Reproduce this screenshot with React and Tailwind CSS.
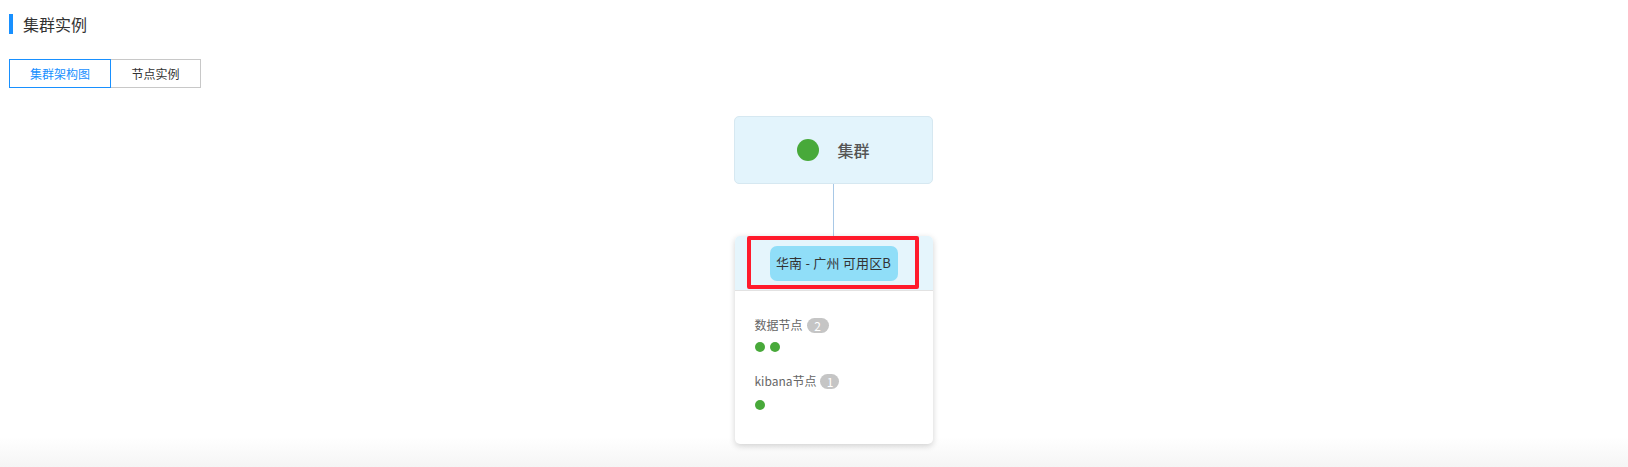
export default function App() {
  return (
    <div
      className="relative w-[1628px] h-[467px] bg-white overflow-hidden"
      style={{ fontFamily: '"Noto Sans CJK SC", "Noto Sans", sans-serif' }}
    >
      <div className="absolute left-0 right-0 bottom-0 h-[30px] bg-gradient-to-b from-white to-[#f5f5f5]" />

      <div className="relative z-10">
        <div className="flex items-center h-[20px] pt-[14px] box-content ml-[9px]">
          <div className="w-[4px] h-[20px] bg-[#1890ff]" />
          <div className="ml-[10px] text-[16px] leading-[20px] text-[#333]">集群实例</div>
        </div>

        <div className="flex mt-[25px] ml-[9px] h-[29px]">
          <div className="w-[102px] h-[29px] border border-[#1890ff] flex items-center justify-center text-[12px] text-[#1890ff]">
            集群架构图
          </div>
          <div className="w-[90px] h-[29px] border border-l-0 border-[#c8c8c8] flex items-center justify-center text-[12px] text-[#333]">
            节点实例
          </div>
        </div>

        <div className="ml-[734px] mt-[28px] w-[199px] flex flex-col items-center">
          <div className="w-[199px] h-[68px] rounded-[5px] bg-[#e3f4fc] border border-[#d6e8f1] flex items-center justify-center gap-[18px]">
            <div className="w-[22px] h-[22px] rounded-full bg-[#48a93a]" />
            <div className="text-[16px] font-medium text-[#555]">集群</div>
          </div>
          <div className="w-px h-[52px] bg-[#a8c8e6]" />
          <div className="relative w-[198px] h-[208px] bg-white rounded-[5px] shadow-[0_2px_6px_rgba(0,0,0,0.18)] overflow-hidden">
            <div className="h-[55px] bg-[#e5f5fc] border-b border-[#e2e2e2] flex items-center justify-center">
              <div className="w-[128px] h-[35px] rounded-[7px] bg-[#90def8] flex items-center justify-center text-[13px] tracking-[0.2px] text-[#333]">
                华南 - 广州 可用区B
              </div>
            </div>
            <div className="absolute left-[12px] top-0 w-[172px] h-[53px] border-[4px] border-[#ff1a2b] rounded-[2px]" />
            <div className="pl-[20px] pt-[26px]">
              <div className="flex items-center h-[16px]">
                <span className="text-[12px] text-[#666]">数据节点</span>
                <span className="ml-[4px] w-[22px] h-[15px] rounded-full bg-[#c5c5c5] text-white text-[12px] leading-[15px] flex items-center justify-center">2</span>
              </div>
              <div className="flex gap-[5px] mt-[9px]">
                <div className="w-[10px] h-[10px] rounded-full bg-[#48a93a]" />
                <div className="w-[10px] h-[10px] rounded-full bg-[#48a93a]" />
              </div>
              <div className="flex items-center h-[16px] mt-[21px]">
                <span className="text-[12px] text-[#666]">kibana节点</span>
                <span className="ml-[4px] w-[19px] h-[15px] rounded-full bg-[#c5c5c5] text-white text-[12px] leading-[15px] flex items-center justify-center">1</span>
              </div>
              <div className="flex gap-[5px] mt-[11px]">
                <div className="w-[10px] h-[10px] rounded-full bg-[#48a93a]" />
              </div>
            </div>
          </div>
        </div>
      </div>
    </div>
  );
}
